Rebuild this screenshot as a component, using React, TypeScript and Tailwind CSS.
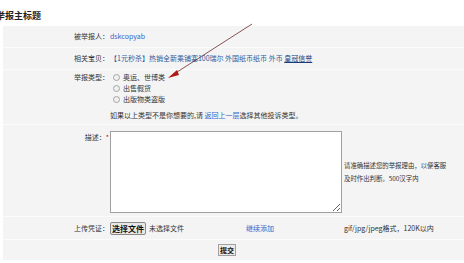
import React from 'react';

const Radio = ({ label }: { label: string }) => (
  <label className="flex items-center h-[11px]">
    <span className="w-[7px] h-[7px] rounded-full border border-[#a5a5a5] bg-[#f0f0f0] mr-[3px] ml-[3px]" />
    <span>{label}</span>
  </label>
);

export default function App() {
  return (
    <div className="relative w-[464px] h-[263px] overflow-hidden bg-white font-['Noto_Sans_CJK_SC','Liberation_Sans',sans-serif] text-[7px] text-[#333]">
      <h2 className="h-[26px] -ml-[4px] pt-[10px] text-[9px] font-bold leading-[11px] text-[#222]">举报主标题</h2>

      <div className="ml-[3px] bg-[#f4f4f4]">
        {/* 被举报人 */}
        <div className="grid grid-cols-[107px_1fr] h-[22px] items-center border-b border-[#fbfbfb]">
          <div className="text-right pr-[1px]">被举报人：</div>
          <div className="text-[#3366cc]">dskcopyab</div>
        </div>

        {/* 相关宝贝 */}
        <div className="grid grid-cols-[107px_1fr] h-[22px] items-center border-b border-[#fbfbfb]">
          <div className="text-right pr-[1px]">相关宝贝：</div>
          <div className="text-[#2d5a9c] whitespace-nowrap">
            【1元秒杀】热销全新乘铺塞100瑞尔 外国纸币纸币 外币 <span className="text-[#1a3a7a] underline">皇冠信誉</span>
          </div>
        </div>

        {/* 举报类型 */}
        <div className="grid grid-cols-[107px_1fr] pt-[2px] pb-[3px] border-b border-[#fbfbfb]">
          <div className="text-right pr-[1px] leading-[11px]">举报类型：</div>
          <div className="leading-[11px]">
            <Radio label="奥运、世博类" />
            <Radio label="出售假货" />
            <Radio label="出版物类盗版" />
            <div className="mt-[5px] whitespace-nowrap">
              如果以上类型不是你想要的,请 <span className="text-[#3366cc]">返回上一层</span>选择其他投诉类型。
            </div>
          </div>
        </div>

        {/* 描述 */}
        <div className="grid grid-cols-[107px_1fr] pt-[6px] pb-[3px] border-b border-[#fbfbfb]">
          <div className="text-right pr-[1px] pt-[1px] leading-[10px]">
            描述：<span className="text-[#e00]">*</span>
          </div>
          <div className="flex items-center">
            <textarea className="w-[232px] h-[82px] border border-[#a0a0a0] bg-white" />
            <div className="ml-[2px] w-[104px] text-[6.4px] leading-[13px]">请准确描述您的举报理由，以便客服及时作出判断。500汉字内</div>
          </div>
        </div>

        {/* 上传凭证 */}
        <div className="grid grid-cols-[107px_1fr] h-[23px] items-center border-b border-[#fbfbfb]">
          <div className="text-right pr-[1px]">上传凭证：</div>
          <div className="flex items-center">
            <button className="h-[13px] w-[36px] border border-[#8a8a8a] rounded-[2px] bg-[#e8e8e8] text-[8px] font-bold leading-[11px] text-[#111]">选择文件</button>
            <span className="ml-[3px]">未选择文件</span>
            <span className="ml-[62px] text-[#3366cc]">继续添加</span>
            <span className="ml-[70px]">gif/jpg/jpeg格式，120K以内</span>
          </div>
        </div>

        {/* 提交 */}
        <div className="flex h-[20px] items-center pl-[215px]">
          <button className="h-[12px] px-[1px] border border-[#a0a0a0] bg-[#ececec] text-[7px] font-bold leading-[10px] text-[#111]">提交</button>
        </div>
      </div>

      <svg className="absolute left-0 top-0 pointer-events-none" width="464" height="263">
        <line x1="252" y1="24" x2="174" y2="74" stroke="#6b2a2a" strokeWidth="0.8" />
        <polygon points="168,78 177,70 179,75" fill="#b01818" />
      </svg>
    </div>
  );
}
